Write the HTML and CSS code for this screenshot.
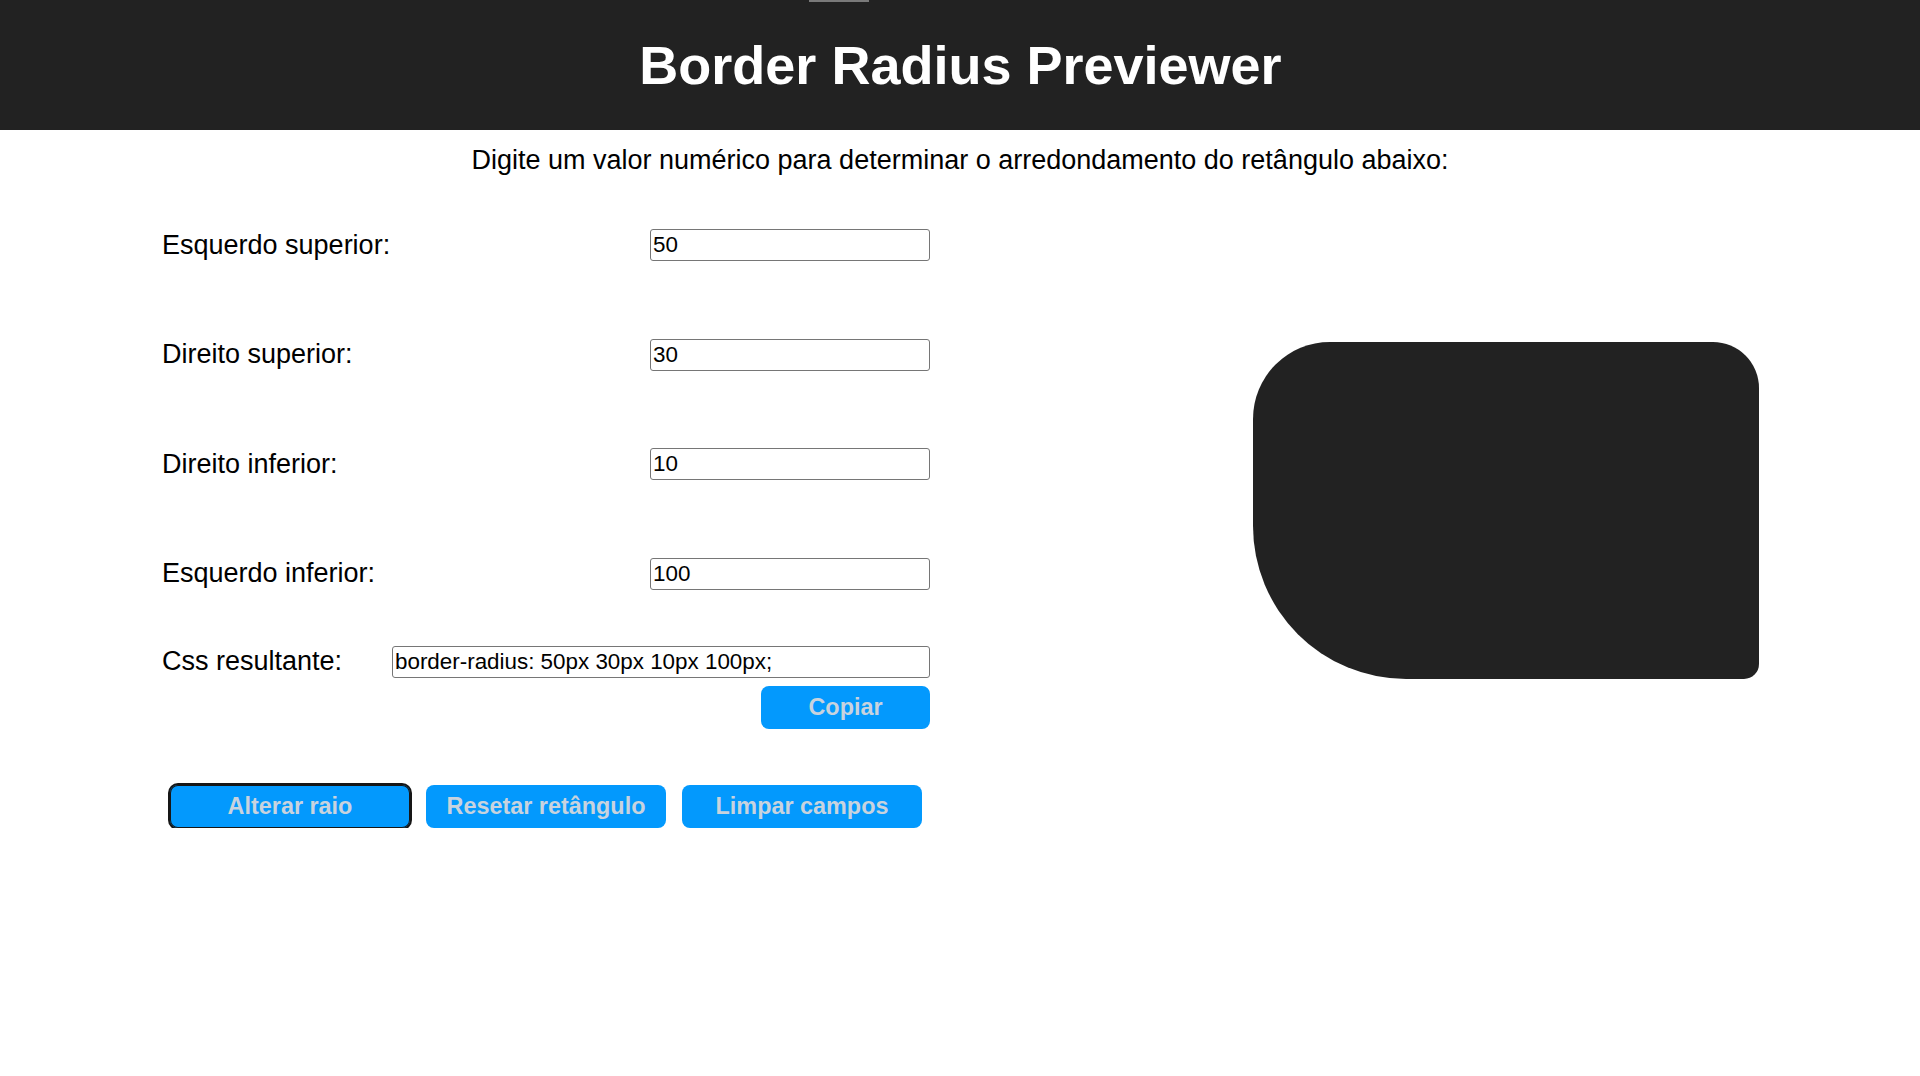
FILE: index.html
```html
<!DOCTYPE html>
<html lang="pt-BR">
<head>
<meta charset="utf-8">
<title>Border Radius Previewer</title>
<link rel="stylesheet" href="styles.css">
</head>
<body>
<header class="topbar">
  <span class="tab-mark"></span>
  <h1 class="title">Border Radius Previewer</h1>
</header>
<p class="intro">Digite um valor numérico para determinar o arredondamento do retângulo abaixo:</p>
<main class="main">
  <section class="form">
    <div class="row">
      <label class="label" for="tl">Esquerdo superior:</label>
      <input class="field" id="tl" type="text" value="50">
    </div>
    <div class="row">
      <label class="label" for="tr">Direito superior:</label>
      <input class="field" id="tr" type="text" value="30">
    </div>
    <div class="row">
      <label class="label" for="br">Direito inferior:</label>
      <input class="field" id="br" type="text" value="10">
    </div>
    <div class="row">
      <label class="label" for="bl">Esquerdo inferior:</label>
      <input class="field" id="bl" type="text" value="100">
    </div>
    <div class="row css-row">
      <label class="label" for="css">Css resultante:</label>
      <input class="field field-wide" id="css" type="text" value="border-radius: 50px 30px 10px 100px;">
    </div>
    <div class="copy-row">
      <button class="btn btn-copy" type="button">Copiar</button>
    </div>
    <div class="actions">
      <button class="btn btn-action is-focused" type="button">Alterar raio</button>
      <button class="btn btn-action" type="button">Resetar retângulo</button>
      <button class="btn btn-action" type="button">Limpar campos</button>
    </div>
  </section>
  <div class="preview"></div>
</main>
</body>
</html>
```

FILE: styles.css
```css
* {
  box-sizing: border-box;
}

body {
  margin: 0;
  background: #ffffff;
  color: #000000;
  font-family: "Liberation Sans", Arial, sans-serif;
}

.topbar {
  position: relative;
  height: 130px;
  background: #222222;
  display: flex;
  align-items: center;
  justify-content: center;
}

.tab-mark {
  position: absolute;
  top: 0;
  left: 809px;
  width: 60px;
  height: 2px;
  background: #7a7a7a;
}

.title {
  margin: 0;
  color: #ffffff;
  font-size: 54px;
  font-weight: bold;
  line-height: 1;
  transform: translateX(0.5px);
}

.intro {
  margin: 15px 0 0;
  font-size: 27px;
  line-height: 31px;
  text-align: center;
}

.main {
  display: flex;
  align-items: flex-start;
  padding-left: 162px;
}

.form {
  width: 768px;
  padding-top: 53px;
  display: flex;
  flex-direction: column;
}

.row {
  display: flex;
  align-items: center;
  justify-content: space-between;
  height: 32px;
  margin-bottom: 77.6px;
}

.row.css-row {
  margin-top: -21.6px;
  margin-bottom: 0;
}

.label {
  font-size: 27px;
  line-height: 31px;
  transform: translateY(-0.5px);
}

.field {
  width: 280px;
  height: 32px;
  padding: 1px 2px;
  border: 1px solid #767676;
  border-radius: 3px;
  font-family: "Liberation Sans", Arial, sans-serif;
  font-size: 22.4px;
  color: #000000;
  background: #ffffff;
}

.field-wide {
  width: 538px;
}

.copy-row {
  display: flex;
  justify-content: flex-end;
  margin-top: 8px;
}

.btn {
  border: 0;
  border-radius: 8px;
  background: #0399fd;
  color: #c8d3de;
  font-family: "Liberation Sans", Arial, sans-serif;
  font-size: 23.4px;
  font-weight: bold;
  cursor: pointer;
}

.btn-copy {
  width: 169px;
  height: 43px;
}

.actions {
  display: flex;
  margin-top: 56px;
}

.btn-action {
  flex: 1;
  height: 43px;
  margin: 0 8px;
}

.btn-action.is-focused {
  box-shadow: 0 0 0 2px #161616, inset 0 0 0 1px #161616;
}

.preview {
  width: 506px;
  height: 337px;
  margin-left: 323px;
  margin-top: 166px;
  background: #222222;
  border-radius: 77px 46px 15px 153px;
}
```
